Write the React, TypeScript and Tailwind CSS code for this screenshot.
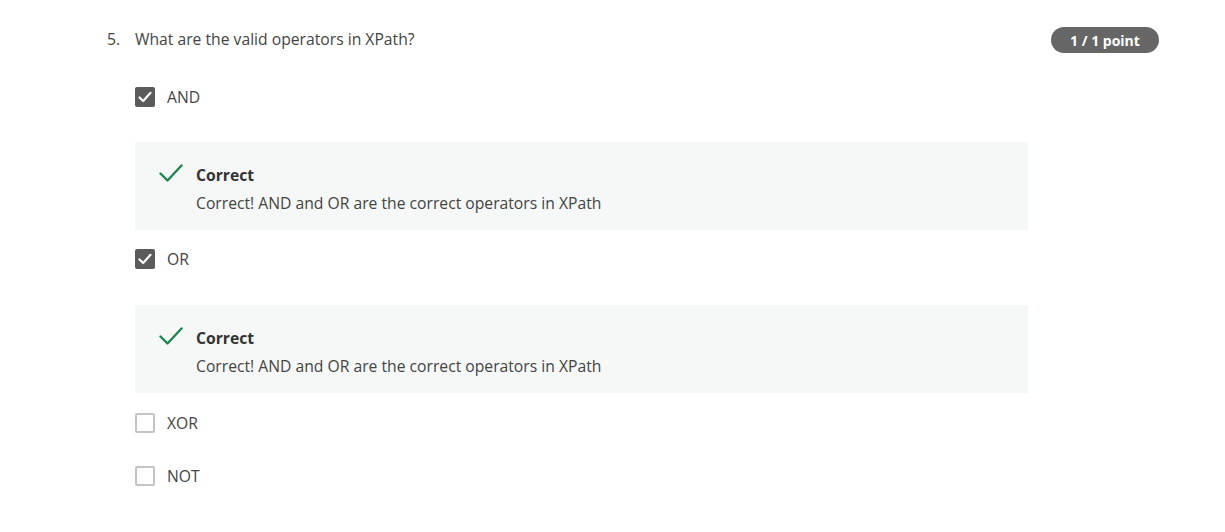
import React from "react";

function Box({ checked }: { checked: boolean }) {
  if (checked) {
    return (
      <span className="flex h-[20px] w-[20px] items-center justify-center rounded-[2px] bg-[#5b5b5b]">
        <svg width="16" height="16" viewBox="0 0 16 16" fill="none">
          <polyline points="2.5,8.5 6.2,12 13.5,3.8" stroke="#ffffff" strokeWidth="2.2" strokeLinecap="round" strokeLinejoin="round" />
        </svg>
      </span>
    );
  }
  return <span className="block h-[20px] w-[20px] rounded-[2px] border-2 border-[#c4c4c4] bg-white" />;
}

function Option({ label, checked, className }: { label: string; checked: boolean; className: string }) {
  return (
    <div className={`flex h-[20px] items-center gap-[12px] ${className}`}>
      <Box checked={checked} />
      <span className="text-[15.7px] leading-[24px] text-[#444444]">{label}</span>
    </div>
  );
}

function Feedback({ className }: { className: string }) {
  return (
    <div className={`flex h-[88px] w-[893px] bg-[#f5f8f7] pl-[24px] pt-[21px] ${className}`}>
      <svg width="24" height="24" viewBox="0 0 24 24" fill="none" className="mt-[-2px] shrink-0">
        <polyline points="1.5,12.5 8.5,19.5 22.5,4.5" stroke="#1f8354" strokeWidth="2.4" strokeLinecap="round" strokeLinejoin="round" />
      </svg>
      <div className="ml-[13px] flex flex-col gap-[4px]">
        <span className="text-[15.7px] font-bold leading-[24px] text-[#333333]">Correct</span>
        <span className="text-[15.7px] leading-[24px] text-[#444444]">Correct! AND and OR are the correct operators in XPath</span>
      </div>
    </div>
  );
}

export default function App() {
  return (
    <div
      className="min-h-[532px] w-[1225px] bg-white pl-[107px] pr-[66px] pt-[27px]"
      style={{ fontFamily: '"Open Sans", "Noto Sans", sans-serif' }}
    >
      <div className="flex h-[26px] items-center justify-between">
        <div className="mt-[-3px] flex items-center text-[15.7px] leading-[24px] text-[#444444]">
          <span className="w-[28px]">5.</span>
          <span>What are the valid operators in XPath?</span>
        </div>
        <span className="flex h-[26px] w-[108px] items-center justify-center rounded-full bg-[#666666] text-[14px] font-bold text-white">
          1 / 1 point
        </span>
      </div>
      <div className="ml-[28px] flex flex-col">
        <Option label="AND" checked className="mt-[34px]" />
        <Feedback className="mt-[35px]" />
        <Option label="OR" checked className="mt-[19px]" />
        <Feedback className="mt-[36px]" />
        <Option label="XOR" checked={false} className="mt-[20px]" />
        <Option label="NOT" checked={false} className="mt-[33px]" />
      </div>
    </div>
  );
}
